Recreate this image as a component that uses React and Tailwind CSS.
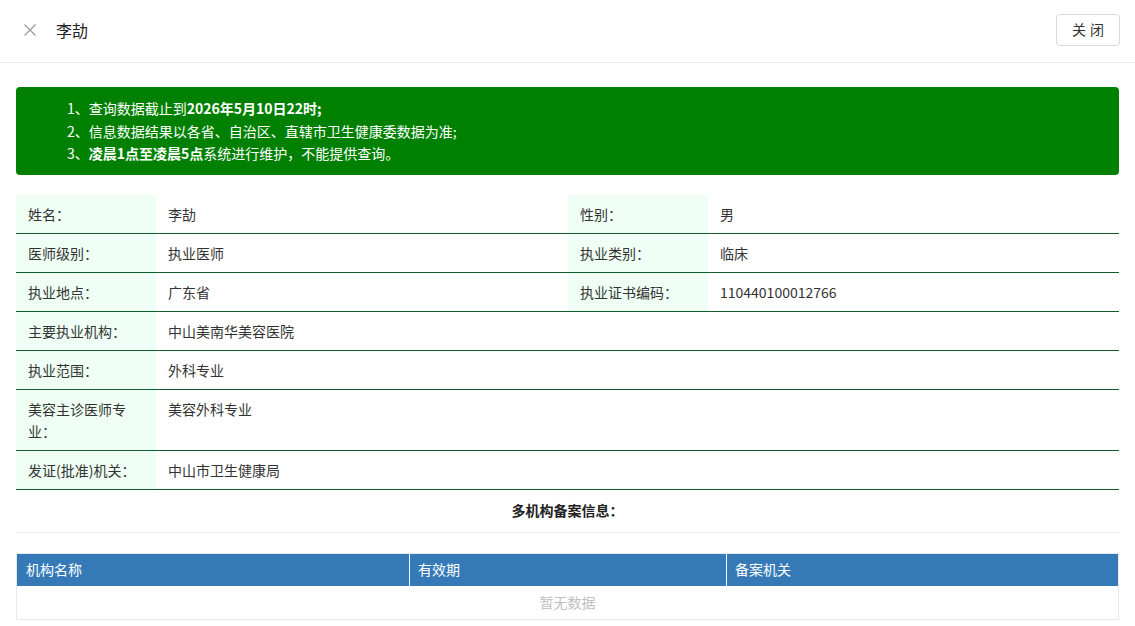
import React from 'react';

// 医师信息详情页
const info = [
    [['姓名：', '李劼'], ['性别：', '男']],
    [['医师级别：', '执业医师'], ['执业类别：', '临床']],
    [['执业地点：', '广东省'], ['执业证书编码：', '110440100012766']],
    [['主要执业机构：', '中山美南华美容医院']],
    [['执业范围：', '外科专业']],
    [['美容主诊医师专业：', '美容外科专业']],
    [['发证(批准)机关：', '中山市卫生健康局']],
];

const Row = ({ cells }) => (
    <div className="flex border-b border-[#0d5e2c]">
        {cells.map(([label, value], i) => (
            <React.Fragment key={i}>
                <div className="w-[140px] shrink-0 bg-[#effff5] px-3 py-2 leading-[22px] text-[#333]">{label}</div>
                <div className={`${cells.length === 1 ? 'flex-1' : 'w-[412px]'} px-3 py-2 leading-[22px] text-[#333] ${i === 1 ? 'flex-1' : ''}`}>{value}</div>
            </React.Fragment>
        ))}
    </div>
);

export default function App() {
    return (
        <div className="w-[1135px] h-[626px] overflow-hidden bg-white text-[14px] font-['Noto_Sans_CJK_SC','Noto_Sans',sans-serif]">
            {/* 顶部标题栏 */}
            <div className="h-[63px] flex items-center justify-between border-b border-[#ececec] pl-6 pr-[15px] pb-[3px]">
                <div className="flex items-center">
                    <svg width="12" height="12" viewBox="0 0 12 12" className="text-[#999]">
                        <path d="M0.5 0.5 L11.5 11.5 M11.5 0.5 L0.5 11.5" stroke="currentColor" strokeWidth="1.2" fill="none" />
                    </svg>
                    <span className="ml-5 text-[16px] text-[#222] leading-6">李劼</span>
                </div>
                <button className="h-[32px] w-[64px] rounded border border-[#d9d9d9] bg-white text-[14px] text-[#333] tracking-[4px] pl-1">关闭</button>
            </div>

            <div className="px-4 pt-6">
                {/* 提示信息 */}
                <div className="rounded bg-[#008000] pl-[51px] py-[10px] text-white leading-[22.5px]">
                    <div>1、查询数据截止到<b>2026年5月10日22时;</b></div>
                    <div>2、信息数据结果以各省、自治区、直辖市卫生健康委数据为准;</div>
                    <div>3、<b>凌晨1点至凌晨5点</b>系统进行维护，不能提供查询。</div>
                </div>

                {/* 基本信息 */}
                <div className="mt-5">
                    {info.map((cells, i) => <Row key={i} cells={cells} />)}
                </div>

                <div className="h-[43px] flex items-center justify-center border-b border-[#ececec] font-bold text-[#222]">多机构备案信息：</div>

                {/* 多机构备案表 */}
                <div className="mt-[20px] border border-[#e8e8e8]">
                    <div className="flex h-[32px] bg-[#357ab7] text-white items-center">
                        <div className="w-[393px] px-[9px] border-r border-white h-full flex items-center">机构名称</div>
                        <div className="w-[317px] px-[8px] border-r border-white h-full flex items-center">有效期</div>
                        <div className="flex-1 px-[8px]">备案机关</div>
                    </div>
                    <div className="h-[33px] flex items-center justify-center text-[#bfbfbf]">暂无数据</div>
                </div>
            </div>
        </div>
    );
}
